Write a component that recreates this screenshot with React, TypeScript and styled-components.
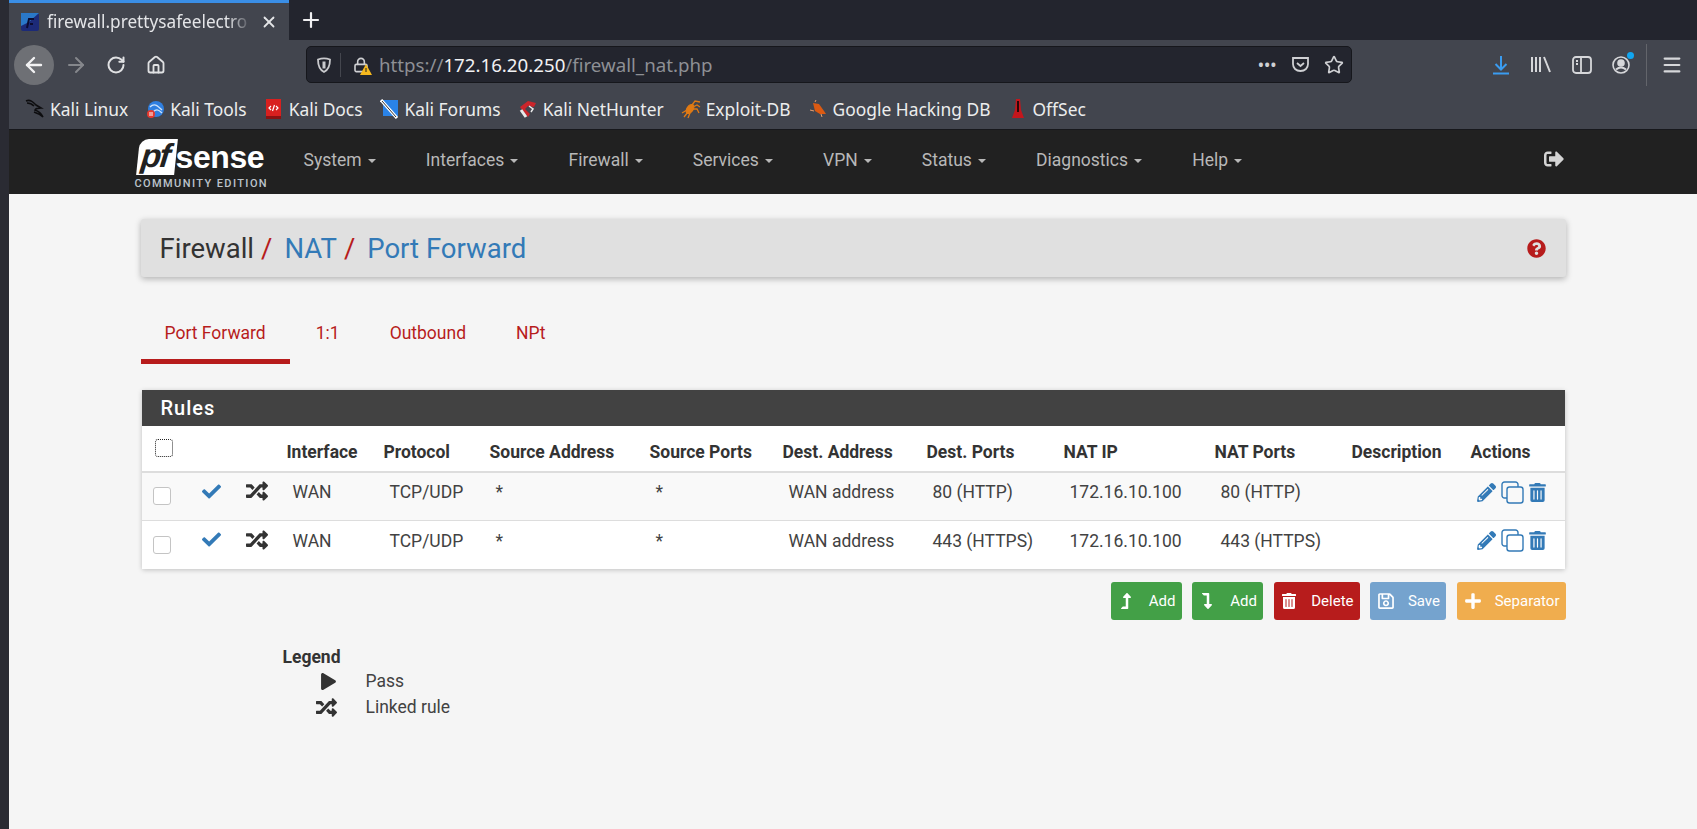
import styled, { createGlobalStyle } from 'styled-components';
import {
  ArrowLeft, ArrowRight, RotateCw, Home, Lock, Star, Plus, X, Menu,
} from 'lucide-react';
import {
  FaCheck, FaRandom, FaPencilAlt, FaTrashAlt, FaLevelUpAlt, FaLevelDownAlt,
  FaRegSave, FaPlus, FaPlay, FaQuestionCircle, FaSignOutAlt,
} from 'react-icons/fa';

const GlobalStyle = createGlobalStyle`
  html, body { margin: 0; padding: 0; background: #f5f5f5; }
  body { font-family: Roboto, "Liberation Sans", sans-serif; overflow: hidden; }
`;

const Screen = styled.div`
  width: 1697px;
  height: 829px;
  box-sizing: border-box;
  border-left: 9px solid #2a2b33;
  display: flex;
  flex-direction: column;
  overflow: hidden;
  background: #f5f5f5;
`;

const TabStrip = styled.div`
  height: 40px;
  background: #23252e;
  display: flex;
  align-items: stretch;
  flex: none;
`;

const Tab = styled.div`
  width: 280px;
  box-sizing: border-box;
  background: #42454e;
  border-top: 3px solid #3a8ee6;
  display: flex;
  align-items: center;
  padding: 0 11px 0 12px;
  gap: 8px;
  color: #e4e5e8;
  font: 17.2px "Noto Sans", sans-serif;
`;

const TabTitle = styled.span`
  flex: 1;
  white-space: nowrap;
  mask-image: linear-gradient(to right, black 88%, transparent);
`;

const NewTab = styled.div`
  width: 44px;
  display: flex;
  align-items: center;
  justify-content: center;
  color: #f0f0f2;
`;

const Toolbar = styled.div`
  height: 49px;
  background: #42454e;
  display: flex;
  align-items: center;
  flex: none;
  padding-left: 5px;
  color: #d6d7da;
`;

const BackButton = styled.div`
  width: 40px;
  height: 40px;
  border-radius: 50%;
  background: #6e7075;
  display: flex;
  align-items: center;
  justify-content: center;
  color: #f2f2f3;
  margin-right: 2px;
`;

const NavIcon = styled.div<{ $dim?: boolean }>`
  width: 40px;
  display: flex;
  justify-content: center;
  color: ${p => (p.$dim ? '#85878c' : '#e0e1e3')};
`;

const UrlBar = styled.div`
  margin-left: 130px;
  width: 1046px;
  height: 37px;
  box-sizing: border-box;
  background: #23252e;
  border: 1px solid #16171c;
  border-radius: 5px;
  display: flex;
  align-items: center;
  padding: 0 7px 0 8px;
  font: 18.7px "Noto Sans", sans-serif;
  color: #8e9095;
`;

const UrlDivider = styled.span`
  width: 1px;
  height: 24px;
  background: #44464e;
  margin: 0 12px 0 7px;
`;

const UrlText = styled.div`
  flex: 1;
  margin-left: 7px;
  white-space: nowrap;
  b { font-weight: 400; color: #f1f1f3; }
`;

const UrlIcons = styled.div`
  display: flex;
  align-items: center;
  gap: 14px;
  color: #cfd0d3;
`;

const MoreDots = styled.span`
  font-size: 14px;
  font-weight: 700;
  letter-spacing: 1px;
`;

const RightIcons = styled.div`
  margin-left: 140px;
  display: flex;
  align-items: center;
  gap: 20px;
  color: #d6d7da;
`;

const Badge = styled.span`
  position: relative;
  display: flex;
  &::after {
    content: '';
    position: absolute;
    top: -4px;
    right: -4px;
    width: 7px;
    height: 7px;
    border-radius: 50%;
    background: #11a6f0;
  }
`;

const Separator = styled.span`
  width: 1px;
  height: 42px;
  background: #63656b;
  margin: 0 -6px 0 -4px;
`;

const BookmarkBar = styled.div`
  height: 40px;
  background: #42454e;
  border-bottom: 1px solid #17181c;
  flex: none;
  display: flex;
  align-items: center;
  padding-left: 16px;
  gap: 17px;
  color: #eceded;
  font: 17.4px "Noto Sans", sans-serif;
`;

const Bookmark = styled.div`
  display: flex;
  align-items: center;
  gap: 5px;
  white-space: nowrap;
`;

const BookmarkIcon = styled.span`
  width: 20px;
  display: flex;
  justify-content: center;
`;

const NavBar = styled.div`
  height: 64px;
  background: #212121;
  flex: none;
  display: flex;
  justify-content: center;
`;

const NavInner = styled.div`
  width: 1425px;
  display: flex;
  align-items: center;
  position: relative;
`;

const Logo = styled.div`
  width: 140px;
  margin-left: -6px;
  margin-top: 4px;
  color: #fff;
  flex: none;
`;

const LogoMark = styled.div`
  display: flex;
  align-items: center;
  height: 37px;
  margin-left: 3px;
`;

const LogoBox = styled.span`
  background: #fff;
  color: #212121;
  font: italic 700 33px/34px "Liberation Sans", sans-serif;
  letter-spacing: -2px;
  border-radius: 9px 0 0 0;
  width: 38px;
  height: 36px;
  text-align: center;
  transform: skewX(-6deg);
  box-sizing: border-box;
  padding-right: 4px;
`;

const LogoWord = styled.span`
  font: 700 32px/34px "Liberation Sans", sans-serif;
  letter-spacing: -0.4px;
`;

const LogoEdition = styled.div`
  font: 500 11px/12px Roboto, sans-serif;
  letter-spacing: 1.4px;
  color: #bcc4cc;
  white-space: nowrap;
  margin-top: 2px;
`;

const NavMenu = styled.div`
  display: flex;
  margin-left: 29px;
  gap: 50.2px;
`;

const NavItem = styled.span`
  font-size: 17.5px;
  color: #b8b8b8;
  display: flex;
  align-items: center;
  gap: 6px;
  margin-top: -4px;
  &::after {
    content: '';
    border-top: 4px solid #b8b8b8;
    border-left: 4px solid transparent;
    border-right: 4px solid transparent;
    margin-top: 2px;
  }
`;

const Logout = styled.span`
  position: absolute;
  right: 2px;
  top: 19px;
  display: flex;
  color: #d4d4d4;
`;

const Page = styled.div`
  width: 1425px;
  margin: 0 auto;
  flex: 1;
  padding-top: 25px;
`;

const TitleBar = styled.div`
  height: 58px;
  background: #e0e0e0;
  border-radius: 3px;
  box-shadow: 0 2px 6px rgba(0, 0, 0, 0.28);
  display: flex;
  align-items: center;
  justify-content: space-between;
  padding: 0 20px 0 19px;
  font-size: 27.5px;
  color: #333;
`;

const Crumbs = styled.div`
  white-space: nowrap;
  a { color: #337ab7; }
  i { font-style: normal; color: #b71c1c; margin: 0 12px 0 7px; }
`;

const TabRow = styled.div`
  display: flex;
  gap: 2px;
  margin-top: 31px;
`;

const TabLink = styled.div<{ $active?: boolean }>`
  height: 56px;
  box-sizing: border-box;
  padding: 15px 24px 0;
  font-size: 17.5px;
  color: #b71c1c;
  border-bottom: 5px solid ${p => (p.$active ? '#b71c1c' : 'transparent')};
`;

const Panel = styled.div`
  margin: 26px 1px 0;
  background: #fff;
  border-radius: 2px;
  box-shadow: 0 1px 5px rgba(0, 0, 0, 0.22);
`;

const PanelHead = styled.div`
  height: 36px;
  background: #424242;
  color: #fff;
  font-size: 20px;
  font-weight: 500;
  letter-spacing: 1px;
  line-height: 37px;
  padding-left: 19px;
`;

const Table = styled.table`
  width: 100%;
  table-layout: fixed;
  border-collapse: collapse;
  font-size: 17.5px;
  color: #424242;
`;

const Th = styled.th<{ $box?: boolean }>`
  height: 46px;
  box-sizing: border-box;
  padding: 6px 0 0 ${p => (p.$box ? '14px' : '6px')};
  font-weight: 700;
  text-align: left;
  white-space: nowrap;
  color: #333;
  border-bottom: 2px solid #ddd;
`;

const Row = styled.tr<{ $striped?: boolean }>`
  height: ${p => (p.$striped ? '48px' : '49px')};
  background: ${p => (p.$striped ? '#f9f9f9' : '#fff')};
`;

const Td = styled.td`
  padding: 0 0 8px 12px;
  border-top: 1px solid #ddd;
  white-space: nowrap;
  vertical-align: middle;
`;

const IconTd = styled(Td)<{ $left: number }>`
  padding: 0 0 6px ${p => p.$left}px;
`;

const Box = styled.span<{ $dotted?: boolean }>`
  display: block;
  width: 18px;
  height: 18px;
  box-sizing: border-box;
  margin-left: -1px;
  margin-top: ${p => (p.$dotted ? '-8px' : '8px')};
  background: #fff;
  border-radius: 3px;
  border: ${p => (p.$dotted ? '1px dotted #222' : '1px solid #c4c4c4')};
`;

const BlueIcons = styled.span`
  display: flex;
  align-items: center;
  color: #337ab7;
  gap: 4px;
  & > :first-child { margin-right: 1px; }
`;

const Buttons = styled.div`
  display: flex;
  justify-content: flex-end;
  gap: 10.5px;
  margin-top: 13px;
`;

const Button = styled.div<{ $bg: string; $w: number }>`
  width: ${p => p.$w}px;
  height: 38px;
  box-sizing: border-box;
  background: ${p => p.$bg};
  border-radius: 3px;
  color: #fff;
  font-size: 15px;
  display: flex;
  align-items: center;
  justify-content: space-between;
  padding: 0 6px 0 7px;
`;

const Legend = styled.div`
  margin: 26px 0 0 142px;
  font-size: 17.5px;
  color: #424242;
  strong { color: #333; font-weight: 700; display: block; line-height: 22px; }
`;

const LegendRow = styled.div`
  display: flex;
  align-items: center;
  height: 26px;
`;

const LegendIcon = styled.span`
  width: 54px;
  display: flex;
  justify-content: flex-end;
  color: #333;
  margin-right: 29px;
`;

const Favicon = () => (
  <svg width="18" height="18" viewBox="0 0 18 18" style={{ flex: 'none' }}>
    <rect width="18" height="18" rx="2" fill="#1c2a78" />
    <path d="M0 0h18L8 9 0 13z" fill="#2a78c8" />
    <path d="M6 15l2-9h5M9 11h3" stroke="#0c0c30" strokeWidth="2" fill="none" />
  </svg>
);

const Dragon = () => (
  <svg width="20" height="20" viewBox="0 0 20 20" fill="none" stroke="#0d0d0f" strokeWidth="1.6">
    <path d="M1 2c4-2 7 1 10 4l5 3c-3 0-5 0-6 2 3 1 6 3 8 7-3-3-6-4-9-5" />
    <path d="M2 4c3 0 5 1 7 3" />
  </svg>
);

const ToolsIcon = () => (
  <svg width="18" height="20" viewBox="0 0 18 20">
    <circle cx="10" cy="10" r="8" fill="#2f7fe0" />
    <path d="M4 8c4-4 7-2 12 3M7 13c3-3 5-3 9 1" stroke="#cfe3fa" strokeWidth="1.4" fill="none" />
    <circle cx="5" cy="15" r="4" fill="#e5392f" />
    <path d="M4 13v4M6 13v4" stroke="#fff" />
  </svg>
);

const DocsIcon = () => (
  <svg width="17" height="20" viewBox="0 0 17 20">
    <rect x="1" y="0" width="15" height="19" fill="#d8201f" />
    <rect x="1" y="17" width="15" height="3" fill="#8a1212" />
    <path d="M6 7L4 9l2 2M11 7l2 2-2 2M9.5 6L7.5 12" stroke="#fff" fill="none" strokeWidth="1.2" />
  </svg>
);

const ForumIcon = () => (
  <svg width="20" height="20" viewBox="0 0 20 20">
    <path d="M3 1h15v16H3z" fill="#2a83e8" />
    <path d="M1 1l8 9 8 9" stroke="#fff" strokeWidth="3.2" />
    <path d="M2 2l7 8 7 8" stroke="#333" strokeWidth="1" />
  </svg>
);

const HunterIcon = () => (
  <svg width="19" height="20" viewBox="0 0 19 20" fill="none">
    <path d="M2 8l8-6 8 2-2 4-6-1-3 3 5 5-2 3z" fill="#c9252b" />
    <path d="M3 11l5 7" stroke="#e8e8e8" strokeWidth="3" />
    <path d="M11 7l4 3-2 3" stroke="#e8e8e8" strokeWidth="1.5" />
  </svg>
);

const SpiderIcon = () => (
  <svg width="20" height="20" viewBox="0 0 20 20" fill="none" stroke="#e07a14" strokeWidth="1.3">
    <ellipse cx="9" cy="10" rx="3" ry="5" transform="rotate(35 9 10)" fill="#e07a14" />
    <path d="M11 6l3-4 5 1M12 8l4-2 3 2M12 10l4 0 2 4M7 13l-4 5M9 14l-2 5M6 11l-5 3" />
  </svg>
);

const BugIcon = () => (
  <svg width="18" height="20" viewBox="0 0 18 20">
    <path d="M4 4l6 1 5 7 2 3-6 0-5-3z" fill="#dc5a12" />
    <path d="M1 11l4 1M12 15l1 3M6 3l1-2" stroke="#e8a070" />
  </svg>
);

const OffSecIcon = () => (
  <svg width="14" height="22" viewBox="0 0 14 22">
    <path d="M5 1h4l1 11 3 8H1l3-8z" fill="#c4161c" />
    <path d="M6 3h2v11H6z" fill="#2a0808" />
  </svg>
);

const Glyph = styled.svg`
  display: block;
  flex: none;
`;

const LockWrap = styled.span`
  position: relative;
  display: flex;
  width: 19px;
`;

const LockWarning = styled(Glyph)`
  position: absolute;
  right: 0;
  bottom: -2px;
`;

const ShieldIcon = () => (
  <Glyph width="18" height="18" viewBox="0 0 18 18" fill="none" stroke="#c9cacd" strokeWidth="1.8">
    <path d="M3 3.5c4-1.6 8-1.6 12 0 0 6-1 10-6 12.500-5-2.500-6-6.500-6-12.500z" />
    <path d="M9 5.500v7" strokeWidth="3" />
  </Glyph>
);

const WarnLock = () => (
  <LockWrap>
    <Lock size={16} color="#cfd0d3" strokeWidth={2.4} />
    <LockWarning width="12" height="11" viewBox="0 0 12 11">
      <path d="M6 0l6 11H0z" fill="#f5b81e" />
      <path d="M6 4v4" stroke="#222" />
    </LockWarning>
  </LockWrap>
);

const PocketIcon = () => (
  <Glyph width="19" height="19" viewBox="0 0 19 19" fill="none" stroke="#cfd0d3" strokeWidth="1.8">
    <path d="M2 3h15v6c0 4-3 7-7.500 7S2 13 2 9z" />
    <path d="M6 8l3.500 3L13 8" />
  </Glyph>
);

const DownloadIcon = () => (
  <Glyph width="18" height="20" viewBox="0 0 18 20" fill="none" stroke="#3a9cf0" strokeWidth="2">
    <path d="M9 1v13M3.500 9L9 14.500 14.500 9" />
    <path d="M1 18.500h16" />
  </Glyph>
);

const LibraryIcon = () => (
  <Glyph width="22" height="19" viewBox="0 0 22 19" fill="none" stroke="#d6d7da" strokeWidth="2">
    <path d="M2 2v15M6 2v15M10 2v15M14 2l6 15" />
  </Glyph>
);

const SidebarIcon = () => (
  <Glyph width="20" height="18" viewBox="0 0 20 18" fill="none" stroke="#d6d7da" strokeWidth="1.8">
    <rect x="1" y="1" width="18" height="16" rx="3" />
    <path d="M9 1v16M4 5h2M4 8h2" />
  </Glyph>
);

const AccountIcon = () => (
  <Badge>
    <Glyph width="18" height="18" viewBox="0 0 18 18" fill="none" stroke="#d6d7da" strokeWidth="1.6">
      <circle cx="9" cy="9" r="8" />
      <circle cx="9" cy="7" r="3" fill="#d6d7da" />
      <path d="M4 13.500c3-2.500 7-2.500 10 0" strokeWidth="2" />
    </Glyph>
  </Badge>
);

const CloneIcon = () => (
  <Glyph width="23" height="23" viewBox="0 0 23 23" fill="none" stroke="#337ab7" strokeWidth="1.4">
    <path d="M6 17H3.500A2.500 2.500 0 0 1 1 14.500V3.500A2.500 2.500 0 0 1 3.500 1h11A2.500 2.500 0 0 1 17 3.500V6" />
    <rect x="6" y="6" width="16" height="16" rx="2.500" />
  </Glyph>
);

const bookmarks = [
  { label: 'Kali Linux', icon: <Dragon /> },
  { label: 'Kali Tools', icon: <ToolsIcon /> },
  { label: 'Kali Docs', icon: <DocsIcon /> },
  { label: 'Kali Forums', icon: <ForumIcon /> },
  { label: 'Kali NetHunter', icon: <HunterIcon /> },
  { label: 'Exploit-DB', icon: <SpiderIcon /> },
  { label: 'Google Hacking DB', icon: <BugIcon /> },
  { label: 'OffSec', icon: <OffSecIcon /> },
];

const navItems = ['System', 'Interfaces', 'Firewall', 'Services', 'VPN', 'Status', 'Diagnostics', 'Help'];

const columns = [
  { label: '', width: 48 },
  { label: '', width: 45 },
  { label: '', width: 46 },
  { label: 'Interface', width: 97 },
  { label: 'Protocol', width: 106 },
  { label: 'Source Address', width: 160 },
  { label: 'Source Ports', width: 133 },
  { label: 'Dest. Address', width: 144 },
  { label: 'Dest. Ports', width: 137 },
  { label: 'NAT IP', width: 151 },
  { label: 'NAT Ports', width: 137 },
  { label: 'Description', width: 119 },
  { label: 'Actions', width: 100 },
];

const rules = [
  { port: '80 (HTTP)' },
  { port: '443 (HTTPS)' },
];

export default function App() {
  return (
    <Screen>
      <GlobalStyle />
      <TabStrip>
        <Tab>
          <Favicon />
          <TabTitle>firewall.prettysafeelectro</TabTitle>
          <X size={18} strokeWidth={2.4} />
        </Tab>
        <NewTab><Plus size={24} strokeWidth={2.2} /></NewTab>
      </TabStrip>
      <Toolbar>
        <BackButton><ArrowLeft size={24} strokeWidth={2.4} /></BackButton>
        <NavIcon $dim><ArrowRight size={24} strokeWidth={2} /></NavIcon>
        <NavIcon><RotateCw size={20} strokeWidth={2.4} /></NavIcon>
        <NavIcon><Home size={20} strokeWidth={2.2} /></NavIcon>
        <UrlBar>
          <ShieldIcon />
          <UrlDivider />
          <WarnLock />
          <UrlText>https://<b>172.16.20.250</b>/firewall_nat.php</UrlText>
          <UrlIcons>
            <MoreDots>•••</MoreDots>
            <PocketIcon />
            <Star size={20} strokeWidth={2} />
          </UrlIcons>
        </UrlBar>
        <RightIcons>
          <DownloadIcon />
          <LibraryIcon />
          <SidebarIcon />
          <AccountIcon />
          <Separator />
          <Menu size={22} strokeWidth={2.4} />
        </RightIcons>
      </Toolbar>
      <BookmarkBar>
        {bookmarks.map(b => (
          <Bookmark key={b.label}><BookmarkIcon>{b.icon}</BookmarkIcon>{b.label}</Bookmark>
        ))}
      </BookmarkBar>
      <NavBar>
        <NavInner>
          <Logo>
            <LogoMark>
              <LogoBox>pf</LogoBox>
              <LogoWord>sense</LogoWord>
            </LogoMark>
            <LogoEdition>COMMUNITY EDITION</LogoEdition>
          </Logo>
          <NavMenu>
            {navItems.map(n => <NavItem key={n}>{n}</NavItem>)}
          </NavMenu>
          <Logout><FaSignOutAlt size={20} /></Logout>
        </NavInner>
      </NavBar>
      <Page>
        <TitleBar>
          <Crumbs>Firewall<i>/</i><a>NAT</a><i>/</i><a>Port Forward</a></Crumbs>
          <FaQuestionCircle size={19} color="#b71c1c" />
        </TitleBar>
        <TabRow>
          <TabLink $active>Port Forward</TabLink>
          <TabLink>1:1</TabLink>
          <TabLink>Outbound</TabLink>
          <TabLink>NPt</TabLink>
        </TabRow>
        <Panel>
          <PanelHead>Rules</PanelHead>
          <Table>
            <colgroup>
              {columns.map((c, i) => <col key={i} style={{ width: c.width }} />)}
            </colgroup>
            <thead>
              <tr>
                <Th $box><Box $dotted /></Th>
                {columns.slice(1).map((c, i) => <Th key={i}>{c.label}</Th>)}
              </tr>
            </thead>
            <tbody>
              {rules.map((r, i) => (
                <Row key={r.port} $striped={i === 0}>
                  <Td><Box /></Td>
                  <IconTd $left={12}><FaCheck size={19} color="#337ab7" /></IconTd>
                  <IconTd $left={11}><FaRandom size={22} color="#333" /></IconTd>
                  <Td>WAN</Td>
                  <Td>TCP/UDP</Td>
                  <Td>*</Td>
                  <Td>*</Td>
                  <Td>WAN address</Td>
                  <Td>{r.port}</Td>
                  <Td>172.16.10.100</Td>
                  <Td>{r.port}</Td>
                  <Td />
                  <Td>
                    <BlueIcons>
                      <FaPencilAlt size={19} />
                      <CloneIcon />
                      <FaTrashAlt size={19} />
                    </BlueIcons>
                  </Td>
                </Row>
              ))}
            </tbody>
          </Table>
        </Panel>
        <Buttons>
          <Button $bg="#43a047" $w={71}><FaLevelUpAlt size={16} />Add</Button>
          <Button $bg="#43a047" $w={71}><FaLevelDownAlt size={16} />Add</Button>
          <Button $bg="#b71c1c" $w={86}><FaTrashAlt size={16} />Delete</Button>
          <Button $bg="#75a3ce" $w={76}><FaRegSave size={18} />Save</Button>
          <Button $bg="#f0ad4e" $w={109}><FaPlus size={18} />Separator</Button>
        </Buttons>
        <Legend>
          <strong>Legend</strong>
          <LegendRow><LegendIcon><FaPlay size={17} /></LegendIcon>Pass</LegendRow>
          <LegendRow><LegendIcon><FaRandom size={21} /></LegendIcon>Linked rule</LegendRow>
        </Legend>
      </Page>
    </Screen>
  );
}
